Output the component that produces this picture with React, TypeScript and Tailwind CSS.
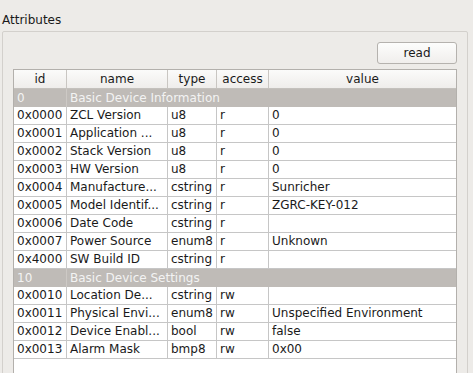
const columns = [
  { key: "id", label: "id", w: "w-[53px]" },
  { key: "name", label: "name", w: "w-[101px]" },
  { key: "type", label: "type", w: "w-[49px]" },
  { key: "access", label: "access", w: "w-[52px]" },
  { key: "value", label: "value", w: "w-[187px]" },
];

type Row =
  | { group: true; id: string; title: string }
  | { group?: false; id: string; name: string; type: string; access: string; value: string };

const rows: Row[] = [
  { group: true, id: "0", title: "Basic Device Information" },
  { id: "0x0000", name: "ZCL Version", type: "u8", access: "r", value: "0" },
  { id: "0x0001", name: "Application ...", type: "u8", access: "r", value: "0" },
  { id: "0x0002", name: "Stack Version", type: "u8", access: "r", value: "0" },
  { id: "0x0003", name: "HW Version", type: "u8", access: "r", value: "0" },
  { id: "0x0004", name: "Manufacture...", type: "cstring", access: "r", value: "Sunricher" },
  { id: "0x0005", name: "Model Identif...", type: "cstring", access: "r", value: "ZGRC-KEY-012" },
  { id: "0x0006", name: "Date Code", type: "cstring", access: "r", value: "" },
  { id: "0x0007", name: "Power Source", type: "enum8", access: "r", value: "Unknown" },
  { id: "0x4000", name: "SW Build ID", type: "cstring", access: "r", value: "" },
  { group: true, id: "10", title: "Basic Device Settings" },
  { id: "0x0010", name: "Location De...", type: "cstring", access: "rw", value: "" },
  { id: "0x0011", name: "Physical Envi...", type: "enum8", access: "rw", value: "Unspecified Environment" },
  { id: "0x0012", name: "Device Enabl...", type: "bool", access: "rw", value: "false" },
  { id: "0x0013", name: "Alarm Mask", type: "bmp8", access: "rw", value: "0x00" },
];

export default function App() {
  return (
    <div
      className="w-[473px] h-[373px] overflow-hidden bg-[#edebe8] text-[12px] text-[#1a1a1a] px-[2px]"
      style={{ fontFamily: '"DejaVu Sans", sans-serif' }}
    >
      <div className="pt-[13px] leading-[14px] h-[31px]">Attributes</div>

      {/* group box */}
      <div className="w-[466px] h-[360px] border border-[#d3d0cc] rounded-[2px] px-[10px] pt-[10px]">
        <div className="flex justify-end">
          <button className="w-[80px] h-[22px] rounded-[3px] border border-[#b5b2ae] bg-linear-to-b from-[#fdfdfc] to-[#f0eeec] leading-[20px] text-[#1a1a1a]">
            read
          </button>
        </div>

        {/* table */}
        <div className="mt-[5px] w-[444px] h-[320px] border border-[#b3b0ac] bg-white">
          <div className="flex h-[19px] border-b border-[#c4c1bd] bg-linear-to-b from-[#fbfbfa] to-[#efedeb]">
            {columns.map((c, i) => (
              <div
                key={c.key}
                className={`${c.w} shrink-0 text-center leading-[18px] ${
                  i < columns.length - 1 ? "border-r border-[#c9c6c2]" : ""
                }`}
              >
                {c.label}
              </div>
            ))}
          </div>

          {rows.map((r) =>
            r.group ? (
              <div key={r.id} className="flex h-[18px] bg-[#bfbbb7] text-[#f3f3f3] leading-[18px]">
                <div className="w-[53px] shrink-0 pl-[3px] border-r border-[#cdc9c5]">{r.id}</div>
                <div className="pl-[3px] whitespace-nowrap">{r.title}</div>
              </div>
            ) : (
              <div key={r.id} className="flex h-[18px] border-b border-[#c6c6c6] leading-[17px]">
                <div className="w-[53px] shrink-0 pl-[3px] border-r border-[#c6c6c6]">{r.id}</div>
                <div className="w-[101px] shrink-0 pl-[3px] border-r border-[#c6c6c6] whitespace-nowrap overflow-hidden">
                  {r.name}
                </div>
                <div className="w-[49px] shrink-0 pl-[3px] border-r border-[#c6c6c6]">{r.type}</div>
                <div className="w-[52px] shrink-0 pl-[3px] border-r border-[#c6c6c6]">{r.access}</div>
                <div className="w-[187px] shrink-0 pl-[3px] whitespace-nowrap">{r.value}</div>
              </div>
            )
          )}
        </div>
      </div>
    </div>
  );
}
